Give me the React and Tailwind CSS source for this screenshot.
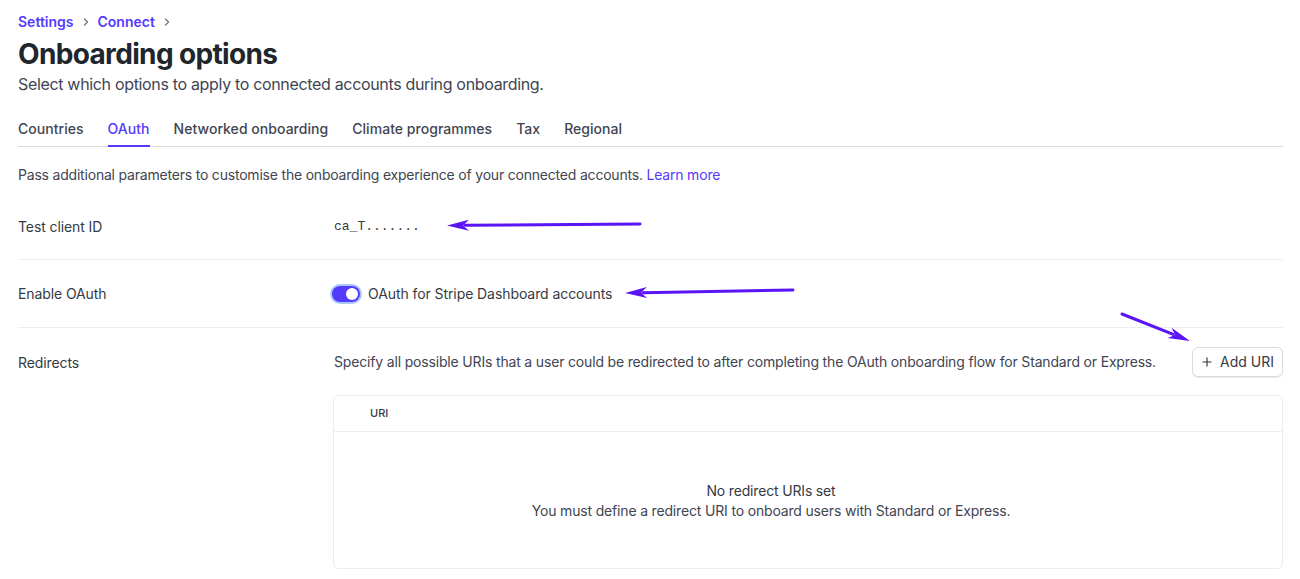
import { Plus, ChevronRight } from 'lucide-react'

const tabs = ['Countries', 'OAuth', 'Networked onboarding', 'Climate programmes', 'Tax', 'Regional']

// Hand-drawn annotation arrow overlaid on the page
function Arrow({ x1, y1, x2, y2 }) {
  const dx = x2 - x1
  const dy = y2 - y1
  const len = Math.sqrt(dx * dx + dy * dy)
  const ux = dx / len
  const uy = dy / len
  const bx = x2 - ux * 22
  const by = y2 - uy * 22
  const px = -uy * 5.5
  const py = ux * 5.5
  return (
    <g>
      <line x1={x1} y1={y1} x2={bx + ux * 4} y2={by + uy * 4} stroke="#5b14f5" strokeWidth="3" strokeLinecap="round" />
      <polygon points={`${x2},${y2} ${bx + px},${by + py} ${bx + ux * 6},${by + uy * 6} ${bx - px},${by - py}`} fill="#5b14f5" />
    </g>
  )
}

export default function App() {
  return (
    <div className="relative w-[1300px] h-[579px] overflow-hidden bg-white font-['Inter',sans-serif] text-[#353a44]">
      <div className="pl-[18px] pr-[17px] pt-[12px]">
        {/* Breadcrumb */}
        <div className="flex items-center gap-[6px] h-5 text-sm leading-5 font-semibold text-[#533afd]">
          <span>Settings</span>
          <ChevronRight className="w-3 h-3 text-[#687385]" strokeWidth={2.5} />
          <span>Connect</span>
          <ChevronRight className="w-3 h-3 text-[#687385]" strokeWidth={2.5} />
        </div>

        <h1 className="mt-[4px] text-[28px] leading-[36px] font-bold text-[#21252c] tracking-[-0.65px]">Onboarding options</h1>
        <p className="text-base leading-6 text-[#414552] tracking-[-0.33px]">Select which options to apply to connected accounts during onboarding.</p>

        {/* Tabs */}
        <div className="mt-[23px] flex gap-6 border-b border-[#d5dbe1]">
          {tabs.map((t) => (
            <div
              key={t}
              className={
                t === 'OAuth'
                  ? 'pb-[6px] -mb-px border-b-2 border-[#533afd] text-sm leading-5 font-medium tracking-[0.04px] text-[#533afd]'
                  : 'pb-[6px] -mb-px border-b-2 border-transparent text-sm leading-5 font-medium tracking-[0.04px] text-[#414552]'
              }
            >
              {t}
            </div>
          ))}
        </div>

        <p className="mt-[18px] text-sm leading-5 text-[#414552] tracking-[-0.2px]">
          Pass additional parameters to customise the onboarding experience of your connected accounts.{' '}
          <span className="text-[#533afd]">Learn more</span>
        </p>

        {/* Test client ID */}
        <div className="mt-[9px] flex items-center h-[66px] border-b border-[#ebeef1]">
          <div className="w-[316px] text-sm text-[#353a44] tracking-[-0.1px]">Test client ID</div>
          <div className="font-['Liberation_Mono',monospace] text-[13px] text-[#353a44]">ca_T.......</div>
        </div>

        {/* Enable OAuth */}
        <div className="flex items-center h-[68px] border-b border-[#ebeef1]">
          <div className="w-[316px] text-sm text-[#353a44] tracking-[-0.1px]">Enable OAuth</div>
          <div className="flex items-center gap-[6px] -ml-[4px]">
            <div className="p-[2px] rounded-full bg-[#a8c8ff]">
              <div className="w-[28px] h-[16px] rounded-full bg-[#533afd] flex items-center justify-end pr-[2px]">
                <div className="w-[12px] h-[12px] rounded-full bg-white" />
              </div>
            </div>
            <span className="text-sm text-[#353a44] tracking-[-0.08px]">OAuth for Stripe Dashboard accounts</span>
          </div>
        </div>

        {/* Redirects */}
        <div className="flex pt-[19px]">
          <div className="w-[316px] text-sm leading-5 pt-[6px] text-[#353a44] tracking-[-0.1px]">Redirects</div>
          <div className="flex-1">
            <div className="flex items-center justify-between">
              <span className="text-sm text-[#414552] tracking-[-0.17px]">
                Specify all possible URIs that a user could be redirected to after completing the OAuth onboarding flow for Standard or Express.
              </span>
              <button className="flex items-center gap-[6px] h-[30px] pl-[7px] pr-[8px] rounded-md border border-[#d5dbe1] bg-white shadow-[0_1px_1px_rgba(0,0,0,0.08)] text-sm font-normal text-[#353a44]">
                <Plus className="w-[14px] h-[14px]" strokeWidth={2} />
                Add URI
              </button>
            </div>

            <div className="mt-[18px] -ml-px rounded-md border border-[#ebeef1] h-[174px]">
              <div className="h-[36px] flex items-center pl-[36px] border-b border-[#ebeef1] text-[11px] font-medium text-[#353a44]">
                URI
              </div>
              <div className="pt-[49px] pr-[74px] text-center text-sm leading-5 text-[#414552] tracking-[-0.17px]">
                <div className="text-[#353a44]">No redirect URIs set</div>
                <div>You must define a redirect URI to onboard users with Standard or Express.</div>
              </div>
            </div>
          </div>
        </div>
      </div>

      {/* Annotation arrows */}
      <svg className="absolute inset-0 pointer-events-none" width="1300" height="579">
        <Arrow x1={640} y1={224} x2={447} y2={225.5} />
        <Arrow x1={793} y1={290} x2={625} y2={293} />
        <Arrow x1={1122} y1={314} x2={1190} y2={341} />
      </svg>
    </div>
  )
}
